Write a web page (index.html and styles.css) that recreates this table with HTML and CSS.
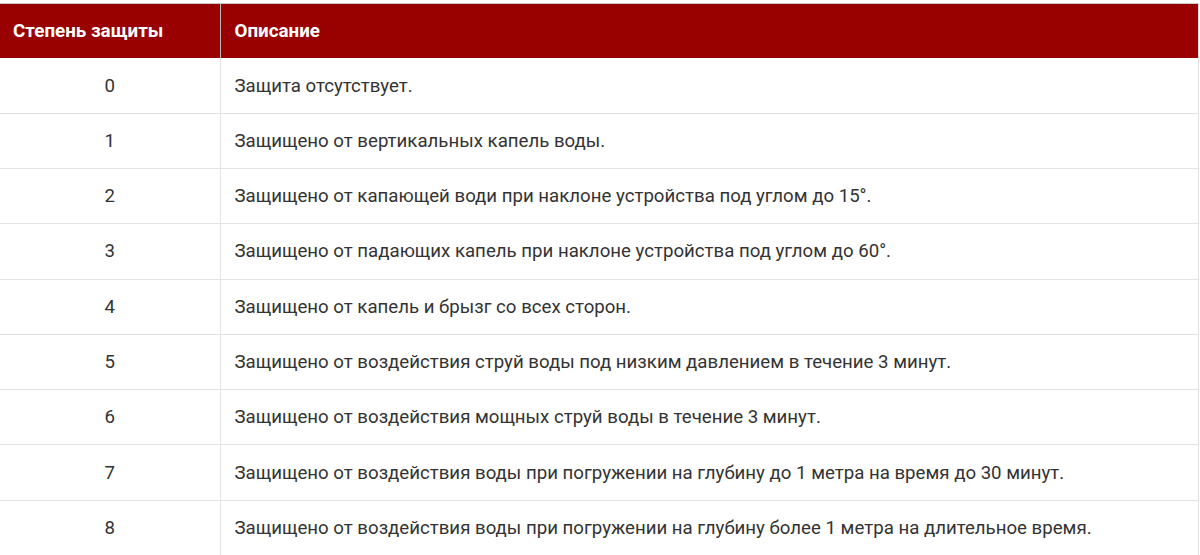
FILE: index.html
```html
<!DOCTYPE html>
<html lang="ru">
<head>
<meta charset="utf-8">
<link rel="stylesheet" href="styles.css">
</head>
<body>
<table class="ip-table">
  <thead>
    <tr><th class="c1">Степень защиты</th><th class="c2">Описание</th></tr>
  </thead>
  <tbody>
    <tr><td class="num">0</td><td>Защита отсутствует.</td></tr>
    <tr><td class="num">1</td><td>Защищено от вертикальных капель воды.</td></tr>
    <tr><td class="num">2</td><td>Защищено от капающей води при наклоне устройства под углом до 15°.</td></tr>
    <tr><td class="num">3</td><td>Защищено от падающих капель при наклоне устройства под углом до 60°.</td></tr>
    <tr><td class="num">4</td><td>Защищено от капель и брызг со всех сторон.</td></tr>
    <tr><td class="num">5</td><td>Защищено от воздействия струй воды под низким давлением в течение 3 минут.</td></tr>
    <tr><td class="num">6</td><td>Защищено от воздействия мощных струй воды в течение 3 минут.</td></tr>
    <tr><td class="num">7</td><td>Защищено от воздействия воды при погружении на глубину до 1 метра на время до 30 минут.</td></tr>
    <tr><td class="num">8</td><td>Защищено от воздействия воды при погружении на глубину более 1 метра на длительное время.</td></tr>
  </tbody>
</table>
</body>
</html>
```
FILE: styles.css
```css
html, body {
  margin: 0;
  padding: 0;
  background: #fff;
}
body {
  font-family: Roboto, "Liberation Sans", Arial, sans-serif;
  font-size: 18.65px;
  color: #333;
  padding-top: 3px;
}
.ip-table {
  border-collapse: collapse;
  width: 1199px;
  table-layout: fixed;
  border-top: 1px solid #c8c8c8;
  border-right: 1px solid #e0e0e0;
}
.ip-table th {
  background: #990000;
  color: #fff;
  font-weight: 700;
  font-size: 18.8px;
  text-align: left;
  height: 54px;
  padding: 0 13px;
  box-sizing: border-box;
  border-left: 1px solid #b8b8b8;
}
.ip-table th.c1 {
  width: 220px;
  border-left: none;
}
.ip-table th.c2 {
  padding-left: 14px;
}
.ip-table td {
  height: 55.3px;
  box-sizing: border-box;
  padding: 0 14px;
  border-top: 1px solid #e3e3e3;
  border-left: 1px solid #e3e3e3;
  vertical-align: middle;
}
.ip-table tbody tr:first-child td {
  border-top: none;
  height: 55.7px;
  padding-top: 1px;
}
.ip-table td.num {
  text-align: center;
  border-left: none;
}
```
